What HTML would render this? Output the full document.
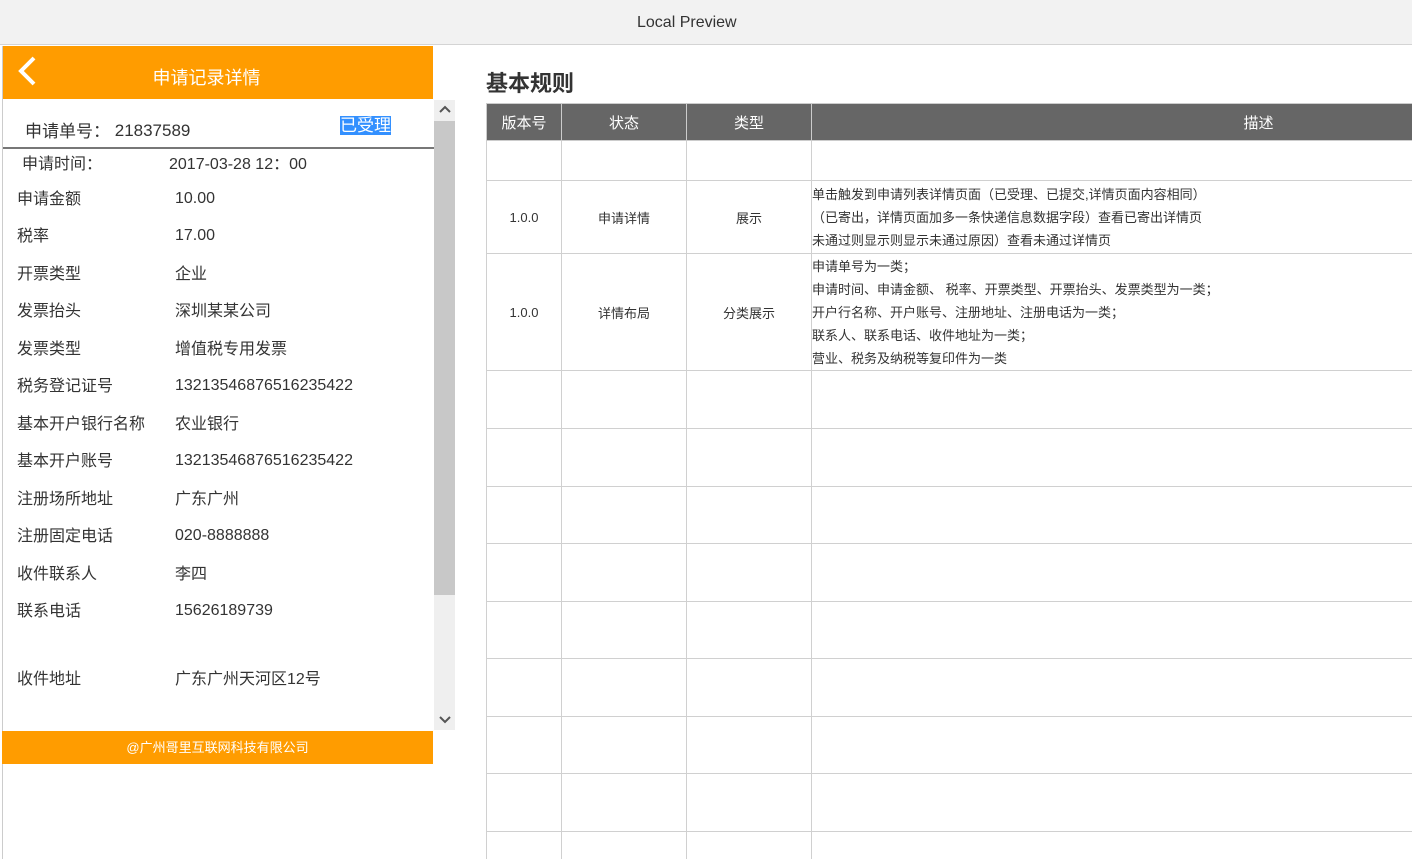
<!DOCTYPE html>
<html><head><meta charset="utf-8"><style>
*{margin:0;padding:0;box-sizing:border-box}
html,body{width:1412px;height:859px;overflow:hidden}
body{background:#fff;font-family:"Liberation Sans","Noto Sans CJK SC",sans-serif;position:relative;color:#333}
.tb{position:absolute;left:0;top:0;width:1412px;height:45px;background:#f2f2f2;border-bottom:1px solid #d4d4d4;line-height:45px;font-size:16px;color:#333}
.hd{position:absolute;left:2px;top:46px;width:409px;height:53px;background:#ff9c00;color:#fff;font-size:18px;text-align:center;line-height:64px}
.hd2{position:absolute;left:411px;top:46px;width:22px;height:53px;background:#ff9c00}
.lb{position:absolute;left:2px;top:46px;width:1px;height:813px;background:#ccc}
.f{position:absolute;font-size:16px;color:#333;white-space:nowrap;line-height:22px;margin-top:2px}
.n{margin-top:3px}
.sb{position:absolute;left:434px;top:100px;width:21px;height:630px;background:#efefef}
.th{position:absolute;left:434px;top:121px;width:21px;height:474px;background:#c8c8c8}
.ft{position:absolute;left:2px;top:731px;width:431px;height:33px;background:#ff9c00;color:#fff;font-size:13px;text-align:center;line-height:33px}
h2{position:absolute;left:486px;top:66px;font-size:22px;color:#333;font-weight:bold}
table{position:absolute;left:486px;top:103px;border-collapse:collapse;table-layout:fixed;width:1220px}
td,th{border:1px solid #d0d0d0;font-size:13px;text-align:center;color:#333;font-weight:normal}
th{background:#666;color:#fff;font-size:15px;height:37px;border-color:#ccc}
td.d{text-align:left;line-height:23px;padding-left:0}
</style></head><body>
<div class="tb"><span style="position:absolute;left:637px">Local Preview</span></div>
<div class="hd">申请记录详情</div><div class="hd2"></div>
<svg style="position:absolute;left:16px;top:55px" width="22" height="32"><path d="M18 3 L5 16 L18 29" stroke="#fff" stroke-width="4" fill="none"/></svg>
<div class="lb"></div>
<div class="f" style="left:25px;top:119px;font-size:17px">申请单号：&nbsp;<span style="position:relative;top:-1px">21837589</span></div>
<div class="f" style="left:340px;top:114px;font-size:17px;background:#3390ff;color:#fff;line-height:19px">已受理</div>
<div style="position:absolute;left:3px;top:147px;width:431px;height:2px;background:#777"></div>
<div class="f" style="left:22px;top:152px">申请时间：</div>
<div class="f" style="left:169px;top:152px">2017-03-28 12：00</div>
<div class="f" style="left:17px;top:187px">申请金额</div><div class="f n" style="left:175px;top:185px">10.00</div>
<div class="f" style="left:17px;top:224px">税率</div><div class="f n" style="left:175px;top:222px">17.00</div>
<div class="f" style="left:17px;top:262px">开票类型</div><div class="f" style="left:175px;top:262px">企业</div>
<div class="f" style="left:17px;top:299px">发票抬头</div><div class="f" style="left:175px;top:299px">深圳某某公司</div>
<div class="f" style="left:17px;top:337px">发票类型</div><div class="f" style="left:175px;top:337px">增值税专用发票</div>
<div class="f" style="left:17px;top:374px">税务登记证号</div><div class="f n" style="left:175px;top:372px">13213546876516235422</div>
<div class="f" style="left:17px;top:412px">基本开户银行名称</div><div class="f" style="left:175px;top:412px">农业银行</div>
<div class="f" style="left:17px;top:449px">基本开户账号</div><div class="f n" style="left:175px;top:447px">13213546876516235422</div>
<div class="f" style="left:17px;top:487px">注册场所地址</div><div class="f" style="left:175px;top:487px">广东广州</div>
<div class="f" style="left:17px;top:524px">注册固定电话</div><div class="f n" style="left:175px;top:522px">020-8888888</div>
<div class="f" style="left:17px;top:562px">收件联系人</div><div class="f" style="left:175px;top:562px">李四</div>
<div class="f" style="left:17px;top:599px">联系电话</div><div class="f n" style="left:175px;top:597px">15626189739</div>
<div class="f" style="left:17px;top:667px">收件地址</div><div class="f" style="left:175px;top:667px">广东广州天河区12号</div>
<div class="sb"></div><div class="th"></div>
<svg style="position:absolute;left:438px;top:103px" width="14" height="12"><path d="M2 9 L7 4 L12 9" stroke="#555" stroke-width="2" fill="none"/></svg>
<svg style="position:absolute;left:438px;top:714px" width="14" height="12"><path d="M2 3 L7 8 L12 3" stroke="#555" stroke-width="2" fill="none"/></svg>
<div class="ft">@广州哥里互联网科技有限公司</div>
<h2>基本规则</h2>
<table>
<colgroup><col style="width:75px"><col style="width:125px"><col style="width:125px"><col></colgroup>
<tr><th>版本号</th><th>状态</th><th>类型</th><th>描述</th></tr>
<tr style="height:40px"><td></td><td></td><td></td><td></td></tr>
<tr style="height:73px"><td>1.0.0</td><td>申请详情</td><td>展示</td><td class="d">单击触发到申请列表详情页面（已受理、已提交,详情页面内容相同）<br>（已寄出，详情页面加多一条快递信息数据字段）查看已寄出详情页<br>未通过则显示则显示未通过原因）查看未通过详情页</td></tr>
<tr style="height:117px"><td>1.0.0</td><td>详情布局</td><td>分类展示</td><td class="d">申请单号为一类；<br>申请时间、申请金额、 税率、开票类型、开票抬头、发票类型为一类；<br>开户行名称、开户账号、注册地址、注册电话为一类；<br>联系人、联系电话、收件地址为一类；<br>营业、税务及纳税等复印件为一类</td></tr>
<tr style="height:58px"><td></td><td></td><td></td><td></td></tr>
<tr style="height:58px"><td></td><td></td><td></td><td></td></tr>
<tr style="height:57px"><td></td><td></td><td></td><td></td></tr>
<tr style="height:58px"><td></td><td></td><td></td><td></td></tr>
<tr style="height:57px"><td></td><td></td><td></td><td></td></tr>
<tr style="height:58px"><td></td><td></td><td></td><td></td></tr>
<tr style="height:57px"><td></td><td></td><td></td><td></td></tr>
<tr style="height:58px"><td></td><td></td><td></td><td></td></tr>
<tr style="height:58px"><td></td><td></td><td></td><td></td></tr>
</table>
</body></html>
